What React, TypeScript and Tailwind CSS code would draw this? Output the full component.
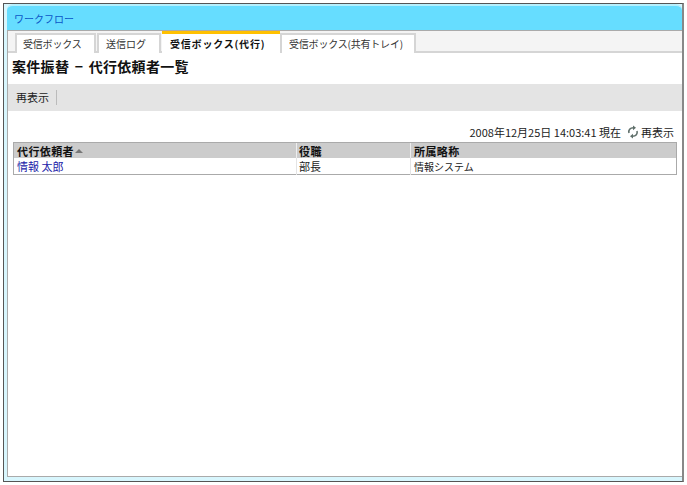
const tabs = [
  { label: "受信ボックス", width: "w-[81px] pl-[6px] tracking-[-0.2px]" },
  { label: "送信ログ", width: "w-[64px] pl-[7px]" },
  { label: "受信ボックス(代行)", width: "w-[118px] pl-[8px] tracking-[0.8px]", active: true },
  { label: "受信ボックス(共有トレイ)", width: "w-[136px] pl-[7px] tracking-[-0.2px]" },
];

const font = "font-['Noto_Sans_CJK_JP','Liberation_Sans',sans-serif]";

function ReloadIcon() {
  return (
    <svg viewBox="0 0 12 14" className="h-[14px] w-[12px]" fill="none" stroke="#5f6f6a" strokeWidth="1.6">
      <path d="M2 8 C1.2 5 3 2.8 6.5 2.8" />
      <path d="M6 0.4 L9 2.8 L6 5.2 Z" fill="#5f6f6a" stroke="none" />
      <path d="M10 6 C10.8 9 9 11.2 5.5 11.2" />
      <path d="M6 8.8 L3 11.2 L6 13.6 Z" fill="#5f6f6a" stroke="none" />
    </svg>
  );
}

export default function App() {
  return (
    <div className={`h-[485px] w-[687px] bg-white pt-[3px] pb-[3px] pl-[3px] pr-[3px] text-[11px] text-[#222] ${font}`}>
      <div className="flex h-full flex-col border border-[#555] border-r-[#888] border-r-2 bg-[#d8f6fd] pl-[3px] pb-[4px]">
        {/* title bar */}
        <div className="flex h-[26px] shrink-0 items-center rounded-t-[6px] border-t-2 border-[#b5effd] bg-[#66ddff] pl-[7px] text-[10px] text-[#0a55c8]">
          ワークフロー
        </div>
        <div className="flex min-h-0 flex-1 flex-col border border-r-0 border-[#aaa] bg-white">
          {/* tabs */}
          <div className="flex h-[22px] shrink-0 border-b-2 border-[#d5d5d5] bg-[#f4f4f4] pl-[7px] text-[10px]">
            {tabs.map((tab) => (
              <div
                key={tab.label}
                className={
                  tab.active
                    ? `${tab.width} -mb-[2px] flex h-[24px] items-center whitespace-nowrap border-t-[3px] border-[#ffc000] bg-white pb-[2px] font-bold text-[#111]`
                    : `${tab.width} mr-px mt-[2px] flex h-[20px] items-center whitespace-nowrap border-x-2 border-t-2 border-[#d5d5d5] bg-white pb-px text-[#333] last:mr-0`
                }
              >
                {tab.label}
              </div>
            ))}
          </div>

          <h1 className="mt-[2px] h-[23px] pl-[4px] text-[14px] leading-[23px] font-bold tracking-[0.3px] [word-spacing:2px] text-[#111]">
            案件振替 − 代行依頼者一覧
          </h1>

          {/* toolbar */}
          <div className="mt-[6px] flex h-[27px] shrink-0 items-center bg-[#e4e4e4] pb-px pl-[8px]">
            <span className="pr-[7px]">再表示</span>
            <span className="h-[15px] w-px bg-[#bbb]" />
          </div>

          {/* timestamp row */}
          <div className="mt-[13px] flex h-[16px] items-center justify-end gap-[6px] pr-[8px] text-[#222]">
            <span>2008年12月25日 14:03:41 現在</span>
            <span className="flex items-center gap-[2px]">
              <ReloadIcon />
              再表示
            </span>
          </div>

          {/* table */}
          <div className="mx-[5px] mt-[2px] border border-[#aaa] bg-white">
            <div className="grid h-[15px] grid-cols-[282px_114px_1fr] items-center bg-[#cccccc] pb-[2px] font-bold tracking-[0.4px] text-[#111]">
              <div className="flex h-full items-center pl-[3px]">
                代行依頼者
                <span className="ml-px h-0 w-0 border-x-[4px] border-b-[4px] border-x-transparent border-b-[#777]" />
              </div>
              <div className="flex h-full items-center border-l border-[#eee] pl-[2px]">役職</div>
              <div className="flex h-full items-center border-l border-[#eee] pl-[3px]">所属略称</div>
            </div>
            <div className="grid h-[16px] grid-cols-[282px_114px_1fr] items-center pb-px text-[#222]">
              <div className="pl-[3px] text-[#1a1aa8]">情報 太郎</div>
              <div className="flex h-full items-center border-l border-[#e4e4e4] pl-[2px]">部長</div>
              <div className="flex h-full items-center border-l border-[#e4e4e4] pl-[3px] text-[10px]">情報システム</div>
            </div>
          </div>
        </div>
      </div>
    </div>
  );
}
